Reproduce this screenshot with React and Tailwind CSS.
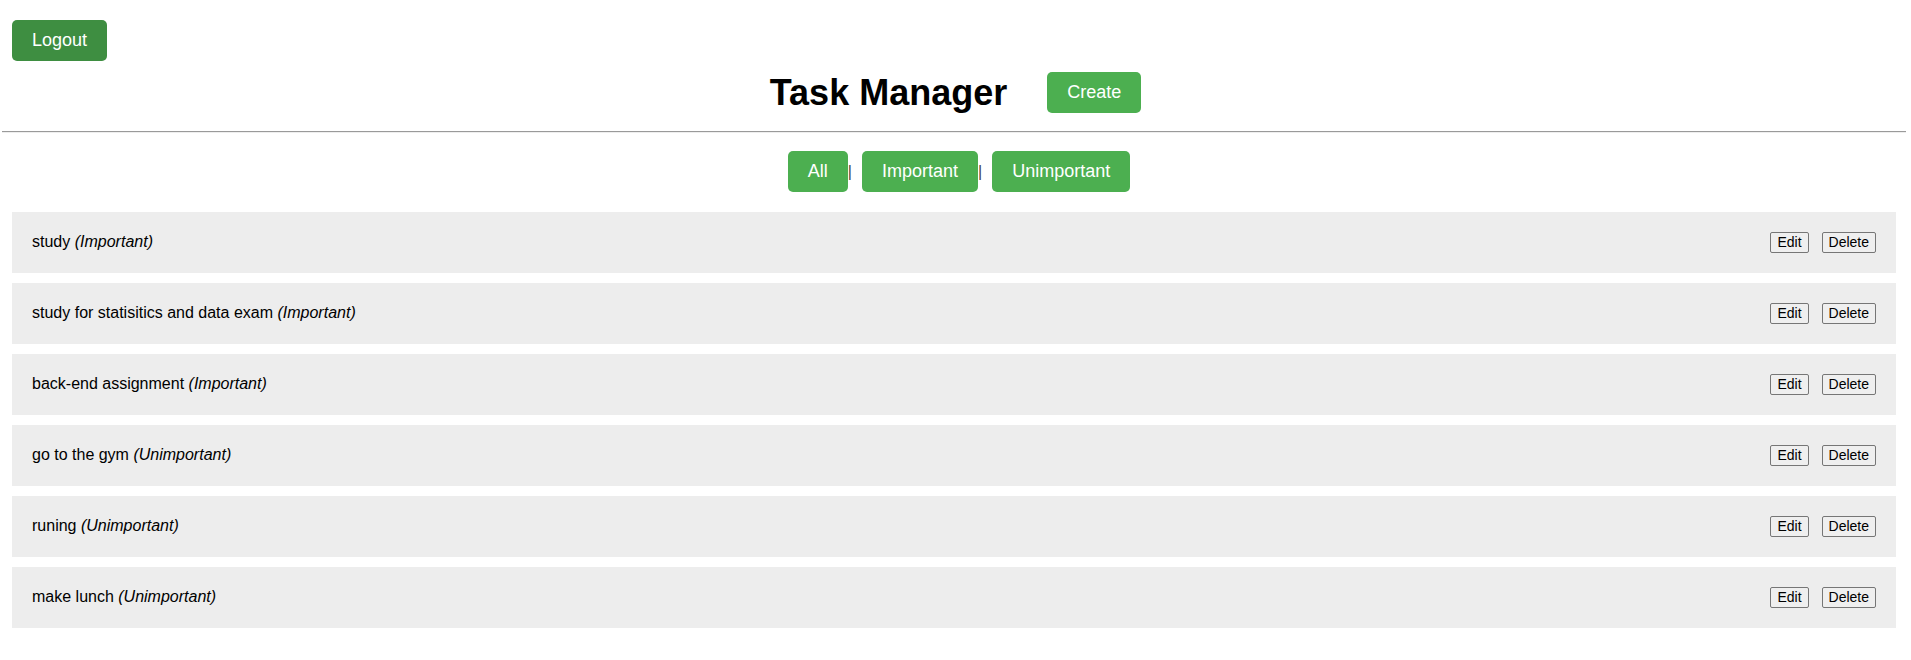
import React from "react";

const tasks = [
  { title: "study", tag: "Important" },
  { title: "study for statisitics and data exam", tag: "Important" },
  { title: "back-end assignment", tag: "Important" },
  { title: "go to the gym", tag: "Unimportant" },
  { title: "runing", tag: "Unimportant" },
  { title: "make lunch", tag: "Unimportant" },
];

function GreenButton({ children, dark }) {
  return (
    <button
      className={
        dark
          ? "h-[41px] px-5 rounded-[5px] bg-[#3e8e41] text-white text-[18px] leading-[21px]"
          : "h-[41px] px-5 rounded-[5px] bg-[#4caf50] text-white text-[18px] leading-[21px]"
      }
    >
      {children}
    </button>
  );
}

function SmallButton({ children }) {
  return (
    <button className="h-[21px] px-[6px] border border-[#767676] rounded-[2px] bg-[#efefef] text-[14px] leading-[17px] text-black">
      {children}
    </button>
  );
}

export default function App() {
  return (
    <div
      className="min-h-screen bg-white text-black"
      style={{ fontFamily: '"Liberation Sans", Arial, sans-serif' }}
    >
      {/* TOP */}
      <div className="pt-[20px] pl-[12px]">
        <GreenButton dark>Logout</GreenButton>
      </div>

      {/* HEADER */}
      <div className="mt-[11px] flex items-center justify-center gap-[40px]">
        <h1 className="text-[36px] font-bold leading-[41px]">Task Manager</h1>
        <GreenButton>Create</GreenButton>
      </div>

      <div className="mt-[18px] ml-[2px] mr-[5px] border-t border-b border-t-[#9a9a9a] border-b-[#eeeeee]" />

      {/* FILTERS */}
      <div className="mt-[18px] flex items-baseline justify-center pl-[7px]">
        <GreenButton>All</GreenButton>
        <span className="text-[16px] text-[#444] mr-[10px]">|</span>
        <GreenButton>Important</GreenButton>
        <span className="text-[16px] text-[#444] mr-[10px]">|</span>
        <GreenButton>Unimportant</GreenButton>
      </div>

      {/* TASKS */}
      <div className="mt-[20px] ml-[12px] mr-[15px] flex flex-col gap-[10px]">
        {tasks.map((task, index) => (
          <div
            key={index}
            className="h-[61px] bg-[#ededed] px-[20px] flex items-center justify-between"
          >
            <div className="text-[16px] leading-[18px] pb-[2px]">
              {task.title} <em>({task.tag})</em>
            </div>
            <div className="flex items-center gap-[13px]">
              <SmallButton>Edit</SmallButton>
              <SmallButton>Delete</SmallButton>
            </div>
          </div>
        ))}
      </div>
    </div>
  );
}
